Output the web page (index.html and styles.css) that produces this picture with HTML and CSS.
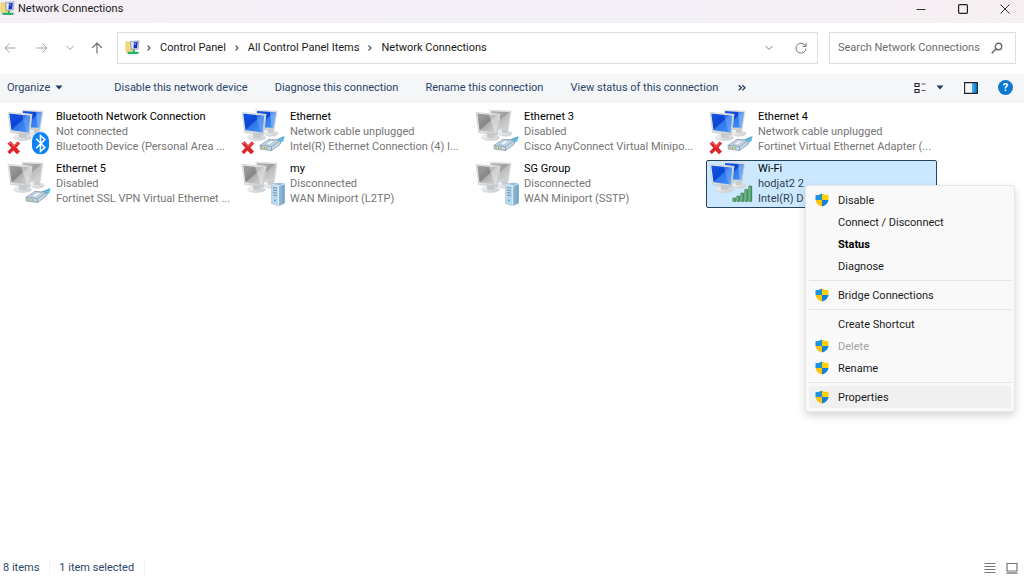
FILE: index.html
```html
<!DOCTYPE html>
<html lang="en">
<head>
<meta charset="utf-8">
<meta name="viewport" content="width=device-width, initial-scale=1">
<title>Network Connections</title>
<link rel="stylesheet" href="styles.css">
</head>
<body>
<svg class="sprite" aria-hidden="true">
  <defs>
    <linearGradient id="blue" x1="0" y1="0" x2="1" y2="1">
      <stop offset="0" stop-color="#1457e4"/><stop offset=".45" stop-color="#0b45d2"/><stop offset=".52" stop-color="#2f78ee"/><stop offset="1" stop-color="#4a94f8"/>
    </linearGradient>
    <linearGradient id="gray" x1="0" y1="0" x2="1" y2="1">
      <stop offset="0" stop-color="#a2a2a2"/><stop offset=".48" stop-color="#868686"/><stop offset=".53" stop-color="#b0b0b0"/><stop offset="1" stop-color="#d8d8d8"/>
    </linearGradient>
    <linearGradient id="metal" x1="0" y1="0" x2="1" y2="1">
      <stop offset="0" stop-color="#fafafa"/><stop offset="1" stop-color="#c4c8ca"/>
    </linearGradient>
    <linearGradient id="steel" x1="0" y1="0" x2="1" y2="0">
      <stop offset="0" stop-color="#c9e0ef"/><stop offset="1" stop-color="#6fa0c4"/>
    </linearGradient>
    <linearGradient id="pane" x1="0" y1="0" x2="1" y2="0">
      <stop offset="0" stop-color="#45b5f0"/><stop offset="1" stop-color="#0078d4"/>
    </linearGradient>
    <linearGradient id="leaf" x1="0" y1="0" x2="1" y2="0">
      <stop offset="0" stop-color="#8fd0a0"/><stop offset="1" stop-color="#2f8a4c"/>
    </linearGradient>
  </defs>
  <symbol id="stands" viewBox="0 0 44 46">
    <ellipse cx="30" cy="24.500" rx="7" ry="2.800" fill="url(#metal)" stroke="#d0d3d5" stroke-width=".5"/>
    <path d="M27 19h5l1 5h-6z" fill="#c9ccce"/>
    <path d="M14.800 1 36 2.200 33 21 17 21z" fill="url(#metal)" stroke="#c3c6c8" stroke-width=".5"/>
    <ellipse cx="15.500" cy="28.500" rx="9" ry="3" fill="url(#metal)" stroke="#c6cacc" stroke-width=".5"/>
    <path d="M12 23h7l1 5.500q-4 1.500-8 0z" fill="#c6cacd"/>
    <path d="M1 3.300 24.600 5.800 22.400 26 3.600 23.600z" fill="url(#metal)" stroke="#b9bdc0" stroke-width=".5"/>
  </symbol>
  <symbol id="monitors-on" viewBox="0 0 44 46">
    <use href="#stands"/>
    <path d="M16 2.100 35 3.200 32.300 18.800 23.900 18.500 25.400 5 16 4.100z" fill="url(#blue)"/>
    <path d="M29 2.900 35 3.200 32.300 18.800 30.500 18.700z" fill="#9ccbfa" opacity=".55"/>
    <path d="M2.200 4.500 23.200 6.800 21.500 23.400 4.500 21.300z" fill="url(#blue)"/>
    <path d="M15 5.900 23.200 6.800 21.500 23.400 19.500 23.100z" fill="#8abcf8" opacity=".4"/>
  </symbol>
  <symbol id="monitors-off" viewBox="0 0 44 46">
    <use href="#stands"/>
    <path d="M16 2.100 35 3.200 32.300 18.800 23.900 18.500 25.400 5 16 4.100z" fill="url(#gray)" opacity=".75"/>
    <path d="M2.200 4.500 23.200 6.800 21.500 23.400 4.500 21.300z" fill="url(#gray)"/>
    <path d="M14 5.800 23.200 6.800 21.500 23.400 19.500 23.100z" fill="#eee" opacity=".5"/>
  </symbol>
  <symbol id="cross" viewBox="0 0 44 46">
    <path d="m.8 34.500 3-2 3.300 3.800 3.700-3.700 2 2-3.600 4 3.600 4-2.800 2.500-3.700-3.800-3.500 3.600L.8 42.700l3.700-4z" fill="#e02228" stroke="#c01018" stroke-width=".4"/>
    <path d="m2.300 34.700 1.500-1 3.300 3.800 3.600-3.600" fill="none" stroke="#f58a8a" stroke-width=".8"/>
  </symbol>
  <symbol id="cable" viewBox="0 0 44 46">
    <path d="M35 31.500 43.700 27 42.500 32 38 35z" fill="#5ec4e8"/>
    <path d="m34 31.500 8.500-3.500" stroke="#3488b0" stroke-width=".8"/>
    <path d="m19 36.500 9-6.200 11.500 1-.3 4-8.700 6.200-11.200-1.500z" fill="#c3d6e6" stroke="#7890a8" stroke-width=".7"/>
    <path d="m19 36.500 11.500 1 9-6.200M30.500 37.500v4" fill="none" stroke="#7b91a5" stroke-width=".7"/>
    <path d="m24 35.500 6-4 4.500.4-6 4z" fill="#f2f8fc" stroke="#91a4b4" stroke-width=".5"/>
    <path d="M21 37.500v2.300M23.500 37.700V40M26 38v2.300" stroke="#a3b548" stroke-width="1.100"/>
  </symbol>
  <symbol id="bluetooth" viewBox="0 0 44 46">
    <rect x="25" y="23.300" width="17" height="22" rx="8" fill="#0a84f5"/>
    <path d="m29.200 29.800 8.600 8.700-4.300 4v-16l4.300 4-8.600 8.700" fill="none" stroke="#fff" stroke-width="1.600"/>
  </symbol>
  <symbol id="server" viewBox="0 0 44 46">
    <path d="m30.500 23.500 7-1.500 6.300 1v19l-6 2.800-7.300-2.300z" fill="url(#steel)" stroke="#84aeca" stroke-width=".5"/>
    <path d="m30.500 23.500 7 1.300v20l-7-2.300z" fill="#bcd8ea"/>
    <path d="m30.500 23.500 7 1.300 6.300-1.800M37.500 24.800v20" fill="none" stroke="#f0f8fd" stroke-width=".7"/>
    <path d="m32 26.500 4 .8M32 29l4 .8M32 31.500l4 .8M32 34l4 .8" stroke="#5c8db0" stroke-width=".9"/>
    <circle cx="34" cy="39.500" r="1" fill="#4da8d4"/>
  </symbol>
  <symbol id="signal" viewBox="0 0 44 46">
    <g fill="url(#leaf)" stroke="#26713f" stroke-width=".6">
      <rect x="23.700" y="37" width="3" height="3.500" rx=".6"/><rect x="27.700" y="35" width="3" height="5.500" rx=".6"/>
      <rect x="31.700" y="32" width="3" height="8.500" rx=".6"/><rect x="35.700" y="28.500" width="3" height="12" rx=".6"/>
      <rect x="39.700" y="25" width="3" height="15.500" rx=".6"/>
    </g>
  </symbol>
  <symbol id="app" viewBox="0 0 16 16">
    <path d="M1 2h4l1 1h3v9H1z" fill="#f3dc72" stroke="#d2b64a" stroke-width=".5"/>
    <path d="m5.500 1.500 9.500-.8-.8 9L6.500 10.500z" fill="#c3c8d8" stroke="#8d93ad" stroke-width=".6"/>
    <path d="m9 2.500 4.500-.3-.7 6.300-4.300.3z" fill="#1a2fc0"/>
    <path d="m7 3 2.500-.3-.5 6-1.500.2z" fill="#dfe8ff"/>
    <path d="m9.500 4 2-1-.2 2.500z" fill="#8ea8f8"/>
    <path d="M8.500 10.500h2v2H14v2.500H3v-2.500h5.500z" fill="#28b468"/>
    <path d="M1.500 13.600H3m11 0h1.500" stroke="#8f98a0"/>
  </symbol>
  <symbol id="shield" viewBox="0 0 14 14">
    <path d="M7 .5Q4.500 2.300.5 2.300V7H7z" fill="#1e93dc"/>
    <path d="M7 .5q2.500 1.800 6.500 1.800V7H7z" fill="#fcd006"/>
    <path d="M.5 7Q1 11.500 7 13.600V7z" fill="#fbc40a"/>
    <path d="M13.500 7Q13 11.500 7 13.600V7z" fill="#1482d4"/>
  </symbol>
  <symbol id="chevron-right" viewBox="0 0 6 8"><path d="m1.500 1.500 2.500 2.500-2.500 2.500" fill="none" stroke="#555" stroke-width="1.100"/></symbol>
  <symbol id="chevron-down" viewBox="0 0 10 6"><path d="m1.500 1 3.500 3.500L8.500 1" fill="none" stroke="currentColor"/></symbol>
  <symbol id="caret" viewBox="0 0 8 5"><path d="M.5.500h7L4 4.500z" fill="#1c3a5e"/></symbol>
</svg>

<div class="window">
  <header class="titlebar">
    <svg class="app-icon"><use href="#app"/></svg>
    <h1 class="title">Network Connections</h1>
    <button class="caption minimize" type="button" aria-label="Minimize"><svg viewBox="0 0 10 10"><path d="M.5 5.500h9" stroke="#333"/></svg></button>
    <button class="caption maximize" type="button" aria-label="Maximize"><svg viewBox="0 0 10 10"><rect x=".6" y=".6" width="8.800" height="8.800" rx="1" fill="none" stroke="#222" stroke-width="1.200"/></svg></button>
    <button class="caption close" type="button" aria-label="Close"><svg viewBox="0 0 10 10"><path d="m.5.500 9 9m0-9-9 9" stroke="#333"/></svg></button>
  </header>

  <div class="navbar">
    <nav class="history" aria-label="History">
      <button class="nav-button faded" type="button" aria-label="Back"><svg class="arrow" viewBox="0 0 12 12"><path d="M11.500 6H1m4.500-4.500L1 6l4.500 4.500" fill="none" stroke="currentColor"/></svg></button>
      <button class="nav-button faded" type="button" aria-label="Forward"><svg class="arrow" viewBox="0 0 12 12"><path d="M.5 6H11M6.500 1.500 11 6l-4.500 4.500" fill="none" stroke="currentColor"/></svg></button>
      <button class="nav-button faded" type="button" aria-label="Recent locations"><svg class="down"><use href="#chevron-down"/></svg></button>
      <button class="nav-button" type="button" aria-label="Up"><svg class="arrow" viewBox="0 0 12 12"><path d="M6 11.500V1M1.200 5.800 6 1l4.800 4.800" fill="none" stroke="currentColor" stroke-width="1.100"/></svg></button>
    </nav>
    <div class="address">
      <svg class="app-icon"><use href="#app"/></svg>
      <nav class="crumbs" aria-label="Address">
        <svg class="sep"><use href="#chevron-right"/></svg>
        <a class="crumb" href="#">Control Panel</a>
        <svg class="sep"><use href="#chevron-right"/></svg>
        <a class="crumb" href="#">All Control Panel Items</a>
        <svg class="sep"><use href="#chevron-right"/></svg>
        <a class="crumb" href="#">Network Connections</a>
      </nav>
      <button class="nav-button" type="button" aria-label="Previous locations"><svg class="down"><use href="#chevron-down"/></svg></button>
      <button class="nav-button" type="button" aria-label="Refresh"><svg class="arrow" viewBox="0 0 12 12"><path d="M10.600 4.200A5 5 0 1 0 11 6.500M11 .8v3.600H7.400" fill="none" stroke="currentColor"/></svg></button>
    </div>
    <div class="search">
      <input class="search-input" type="text" placeholder="Search Network Connections" aria-label="Search Network Connections">
      <svg class="arrow" viewBox="0 0 12 12"><circle cx="7.500" cy="4.500" r="3.200" fill="none" stroke="#666" stroke-width="1.400"/><path d="M5.200 6.800.8 11.200" stroke="#666" stroke-width="1.600"/></svg>
    </div>
  </div>

  <div class="toolbar">
    <button class="command organize" type="button">Organize <svg class="caret"><use href="#caret"/></svg></button>
    <button class="command" type="button">Disable this network device</button>
    <button class="command" type="button">Diagnose this connection</button>
    <button class="command" type="button">Rename this connection</button>
    <button class="command" type="button">View status of this connection</button>
    <button class="command more" type="button" aria-label="More commands"><svg viewBox="0 0 8 8"><path d="m.8 1.200 2.600 2.600L.8 6.400m3.600-5.200L7 3.800 4.400 6.400" fill="none" stroke="#1c3a5e" stroke-width="1.300"/></svg></button>
    <div class="tools">
      <button class="command view" type="button" aria-label="Change your view"><svg class="arrow" viewBox="0 0 12 12"><path d="M1 1.500h4v3H1zM1 7.500h4v3H1z" fill="none" stroke="#222" stroke-width="1.100"/><path d="M7.500 2h4M7.500 8.500h4" stroke="#555"/></svg><svg class="caret"><use href="#caret"/></svg></button>
      <button class="command" type="button" aria-label="Show the preview pane"><svg class="pane-icon" viewBox="0 0 14 12"><path d="M8 1h5v10H8z" fill="url(#pane)"/><path d="M.6.600h12.800v10.800H.6z" fill="none" stroke="#222" stroke-width="1.100"/></svg></button>
      <button class="command help" type="button" aria-label="Get help">?</button>
    </div>
  </div>

  <main class="content">
    <ul class="items">
      <li class="cell"><button class="item" type="button">
        <svg class="device" viewBox="0 0 44 46"><use href="#monitors-on"/><use href="#cross"/><use href="#bluetooth"/></svg>
        <span class="info"><span class="name">Bluetooth Network Connection</span><span class="line">Not connected</span><span class="line">Bluetooth Device (Personal Area ...</span></span></button></li>
      <li class="cell"><button class="item" type="button">
        <svg class="device" viewBox="0 0 44 46"><use href="#monitors-on"/><use href="#cross"/><use href="#cable"/></svg>
        <span class="info"><span class="name">Ethernet</span><span class="line">Network cable unplugged</span><span class="line">Intel(R) Ethernet Connection (4) I...</span></span></button></li>
      <li class="cell"><button class="item" type="button">
        <svg class="device" viewBox="0 0 44 46"><use href="#monitors-off"/><use href="#cable"/></svg>
        <span class="info"><span class="name">Ethernet 3</span><span class="line">Disabled</span><span class="line">Cisco AnyConnect Virtual Minipo...</span></span></button></li>
      <li class="cell"><button class="item" type="button">
        <svg class="device" viewBox="0 0 44 46"><use href="#monitors-on"/><use href="#cross"/><use href="#cable"/></svg>
        <span class="info"><span class="name">Ethernet 4</span><span class="line">Network cable unplugged</span><span class="line">Fortinet Virtual Ethernet Adapter (...</span></span></button></li>
      <li class="cell"><button class="item" type="button">
        <svg class="device" viewBox="0 0 44 46"><use href="#monitors-off"/><use href="#cable"/></svg>
        <span class="info"><span class="name">Ethernet 5</span><span class="line">Disabled</span><span class="line">Fortinet SSL VPN Virtual Ethernet ...</span></span></button></li>
      <li class="cell"><button class="item" type="button">
        <svg class="device" viewBox="0 0 44 46"><use href="#monitors-off"/><use href="#server"/></svg>
        <span class="info"><span class="name">my</span><span class="line">Disconnected</span><span class="line">WAN Miniport (L2TP)</span></span></button></li>
      <li class="cell"><button class="item" type="button">
        <svg class="device" viewBox="0 0 44 46"><use href="#monitors-off"/><use href="#server"/></svg>
        <span class="info"><span class="name">SG Group</span><span class="line">Disconnected</span><span class="line">WAN Miniport (SSTP)</span></span></button></li>
      <li class="cell"><button class="item selected" type="button">
        <svg class="device" viewBox="0 0 44 46"><use href="#monitors-on"/><use href="#signal"/></svg>
        <span class="info"><span class="name">Wi-Fi</span><span class="line">hodjat2 2</span><span class="line">Intel(R) D</span></span></button>
        <div class="menu" role="menu">
          <button class="option" type="button" role="menuitem"><svg class="shield"><use href="#shield"/></svg>Disable</button>
          <button class="option" type="button" role="menuitem">Connect / Disconnect</button>
          <button class="option default" type="button" role="menuitem">Status</button>
          <button class="option" type="button" role="menuitem">Diagnose</button>
          <hr class="divider">
          <button class="option" type="button" role="menuitem"><svg class="shield"><use href="#shield"/></svg>Bridge Connections</button>
          <hr class="divider">
          <button class="option" type="button" role="menuitem">Create Shortcut</button>
          <button class="option" type="button" role="menuitem" disabled><svg class="shield"><use href="#shield"/></svg>Delete</button>
          <button class="option" type="button" role="menuitem"><svg class="shield"><use href="#shield"/></svg>Rename</button>
          <hr class="divider">
          <button class="option hovered" type="button" role="menuitem"><svg class="shield"><use href="#shield"/></svg>Properties</button>
        </div>
      </li>
    </ul>
  </main>

  <footer class="status">
    <span class="count">8 items</span>
    <span class="count">1 item selected</span>
    <div class="layouts">
      <button class="layout" type="button" aria-label="Details"><svg class="arrow" viewBox="0 0 12 12"><path d="M.5 1.500h11m-11 3h11m-11 3h11m-11 3h11" stroke="#777"/></svg></button>
      <button class="layout" type="button" aria-label="Large icons"><svg class="arrow" viewBox="0 0 12 12"><path d="M1 1.500h10v7.500H1z" fill="#fff" stroke="#777" stroke-width="1.200"/><path d="M.5 11h11" stroke="#888" stroke-width="1.600"/></svg></button>
    </div>
  </footer>
</div>
</body>
</html>
```
FILE: styles.css
```css
* {
  box-sizing: border-box;
}

body {
  margin: 0;
  background: #fff;
  color: #1b1b1b;
  font: 11px/15px Roboto, "Open Sans", sans-serif;
}

button,
input {
  margin: 0;
  padding: 0;
  border: 0;
  background: none;
  color: inherit;
  font: inherit;
}

svg {
  display: block;
  flex: none;
}

.sprite {
  position: absolute;
  width: 0;
  height: 0;
}

.window {
  display: flex;
  flex-direction: column;
  min-height: 100vh;
}

/* Title bar */
.titlebar {
  display: flex;
  align-items: center;
  height: 23px;
  padding-bottom: 6px;
  background: linear-gradient(90deg, #f5eff5, #f2eff7 60%, #f6eff2);
}

.title {
  flex: 1;
  margin: 0 0 0 3px;
  font-size: 11px;
  font-weight: 400;
}

.app-icon {
  width: 15px;
  height: 15px;
}

.caption {
  display: grid;
  place-items: center;
  height: 18px;
}

.minimize {
  width: 38px;
}

.maximize {
  width: 46px;
}

.close {
  width: 38px;
}

.caption svg {
  width: 10px;
  height: 10px;
}

/* Address row */
.navbar {
  display: flex;
  align-items: center;
  height: 51px;
  padding: 0 8px 2px 0;
}

.history {
  display: flex;
  flex: none;
  width: 117px;
}

.nav-button {
  display: grid;
  place-items: center;
  width: 32px;
  height: 30px;
  color: #777;
}

.history .nav-button:first-child {
  width: 24px;
  padding-right: 4px;
}

.history .nav-button:nth-child(2) {
  width: 36px;
}

.history .nav-button:nth-child(3) {
  width: 20px;
}

.history .nav-button:last-child {
  width: 34px;
  color: #666;
}

.history .faded {
  color: #a0a0a0;
}

.arrow {
  width: 12px;
  height: 12px;
}

.down {
  width: 10px;
  height: 6px;
}

.address,
.search {
  display: flex;
  align-items: center;
  height: 32px;
  border: 1px solid #dedede;
}

.address {
  flex: 1;
  padding-left: 7px;
}

.crumbs {
  display: flex;
  flex: 1;
  align-items: center;
  gap: 8px;
  padding-left: 6px;
}

.crumb {
  color: inherit;
  text-decoration: none;
}

.sep {
  width: 6px;
  height: 8px;
}

.search {
  width: 187px;
  margin-left: 11px;
  padding: 0 12px 0 8px;
}

.search-input {
  flex: 1;
  min-width: 0;
  outline: none;
}

.search-input::placeholder {
  color: #6d6d6d;
  opacity: 1;
}

/* Command bar */
.toolbar {
  display: flex;
  align-items: center;
  gap: 27px;
  height: 28px;
  padding: 0 11px 0 7px;
  border-bottom: 1px solid #ececee;
  background: #f4f6f8;
  color: #2b4468;
}

.command {
  white-space: nowrap;
}

.organize,
.view {
  display: flex;
  align-items: center;
  gap: 5px;
}

.organize {
  margin-right: 24px;
}

.view {
  gap: 10px;
}

.caret {
  width: 8px;
  height: 5px;
}

.more {
  margin-left: -7px;
}

.more svg {
  width: 8px;
  height: 8px;
}

.tools {
  display: flex;
  align-items: center;
  gap: 20px;
  margin-left: auto;
}

.pane-icon {
  width: 14px;
  height: 12px;
}

.help {
  width: 15px;
  height: 15px;
  border-radius: 50%;
  background: #0c79d0;
  color: #fff;
  font-weight: 700;
}

/* Connections */
.content {
  flex: 1;
  padding: 6px 4px;
}

.items {
  display: grid;
  grid-template-columns: repeat(auto-fill, 231px);
  gap: 4px 3px;
  margin: 0;
  padding: 0;
  list-style: none;
}

.cell {
  position: relative;
}

.item {
  display: flex;
  gap: 5px;
  width: 100%;
  height: 48px;
  padding: 0 2px;
  border: 1px solid transparent;
  text-align: left;
}

.item.selected {
  border-color: #26435c;
  border-radius: 2px;
  background: #cce8ff;
}

.device {
  width: 44px;
  height: 46px;
}

.info {
  display: flex;
  flex: 1;
  flex-direction: column;
  min-width: 0;
  white-space: nowrap;
}

.name {
  color: #000;
}

.line {
  color: #757575;
}

.selected .line {
  color: #2f3f50;
}

/* Context menu */
.menu {
  position: absolute;
  top: 25px;
  left: 99px;
  z-index: 1;
  width: 210px;
  padding: 3px;
  border: 1px solid #e6e6e6;
  border-radius: 4px;
  background: #f9f9f9;
  box-shadow: 0 4px 8px rgba(0, 0, 0, 0.16);
}

.option {
  display: flex;
  align-items: center;
  gap: 9px;
  width: 100%;
  height: 22px;
  padding-left: 6px;
  border-radius: 3px;
  text-align: left;
}

.option:not(:has(.shield)) {
  padding-left: 29px;
}

.option:disabled {
  color: #a3a3a3;
}

.default {
  color: #000;
  font-weight: 700;
}

.hovered {
  background: #f0f0f0;
}

.shield {
  width: 14px;
  height: 14px;
}

.divider {
  height: 1px;
  margin: 3px 0;
  border: 0;
  background: #e4e4e4;
}

/* Status bar */
.status {
  display: flex;
  align-items: center;
  height: 19px;
  padding: 0 6px 0 3px;
  color: #2b4468;
}

.count {
  margin-right: 9px;
  padding-right: 10px;
  border-right: 1px solid #f2f2f2;
}

.layouts {
  display: flex;
  gap: 10px;
  margin-left: auto;
}
```
